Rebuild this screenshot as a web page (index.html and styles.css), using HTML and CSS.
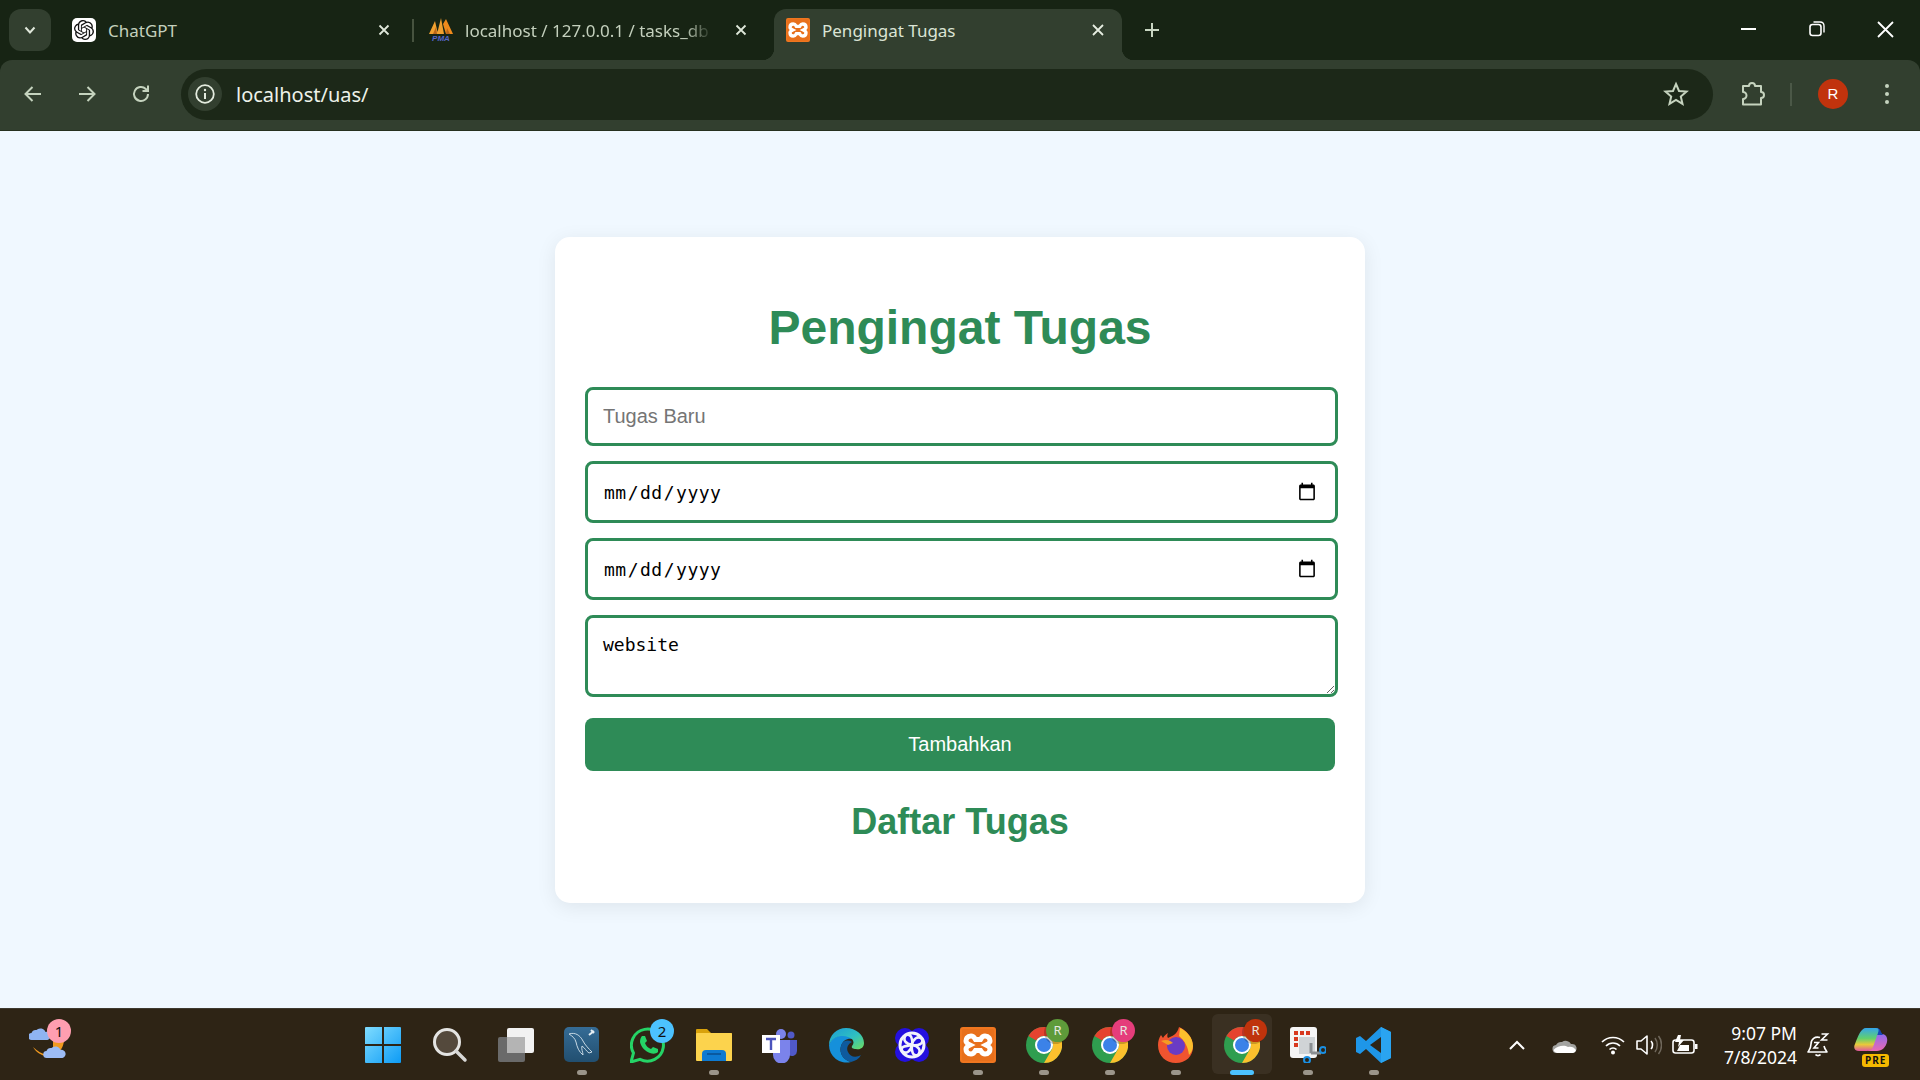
FILE: index.html
```html
<!DOCTYPE html>
<html lang="en">
<head>
    <meta charset="UTF-8">
    <meta name="viewport" content="width=device-width, initial-scale=1.0">
    <title>Pengingat Tugas</title>
    <link rel="stylesheet" href="styles.css">
</head>
<body>
    <svg class="defs" width="0" height="0">
        <defs>
            <symbol id="xampp" viewBox="0 0 36 36">
                <rect x="0" y="0" width="36" height="36" rx="3" fill="#f0761f"/>
                <rect x="2" y="2" width="32" height="32" rx="2" fill="#e8701c"/>
                <path d="M11 9C7 9 6 12 6 14C6 16 8 17 10 18C8 19 6 20 6 22C6 24 7 27 11 27C14 27 14.500 25 15.500 23.500H20.500C21.500 25 22 27 25 27C29 27 30 24 30 22C30 20 28 19 26 18C28 17 30 16 30 14C30 12 29 9 25 9C22 9 21.500 11 20.500 12.500H15.500C14.500 11 14 9 11 9Z" fill="none" stroke="#fff" stroke-width="5"/>
            </symbol>
            <symbol id="chrome" viewBox="0 0 36 36">
                <circle cx="18" cy="18" r="18" fill="#2f9e4f"/>
                <path d="M18 0A18 18 0 0 1 33.600 9L18 9A9 9 0 0 0 10.200 13.500L2.400 9A18 18 0 0 1 18 0Z" fill="#e5432f"/>
                <path d="M33.600 9A18 18 0 0 1 18 36L25.800 22.500A9 9 0 0 0 18 9Z" fill="#fbc02d"/>
                <circle cx="18" cy="18" r="9" fill="#fff"/>
                <circle cx="18" cy="18" r="7" fill="#3b82e8"/>
            </symbol>
            <linearGradient id="winblue" x1="0" y1="0" x2="1" y2="1">
                <stop offset="0" stop-color="#7fdcff"/>
                <stop offset="1" stop-color="#0d9bf5"/>
            </linearGradient>
            <linearGradient id="edgeg" x1="0" y1="0" x2="1" y2="1">
                <stop offset="0" stop-color="#1b9bd8"/>
                <stop offset=".55" stop-color="#2fc0c0"/>
                <stop offset="1" stop-color="#6fdc5f"/>
            </linearGradient>
            <linearGradient id="copg" x1="0" y1="0" x2="0" y2="1">
                <stop offset="0" stop-color="#34a5ea"/>
                <stop offset=".45" stop-color="#62d06d"/>
                <stop offset=".72" stop-color="#e9c93a"/>
                <stop offset="1" stop-color="#e0559f"/>
            </linearGradient>
            <linearGradient id="copr" x1="0" y1="0" x2="0" y2="1">
                <stop offset="0" stop-color="#8f6cf0"/>
                <stop offset="1" stop-color="#ea68b0"/>
            </linearGradient>
            <linearGradient id="mysqlg" x1="0" y1="0" x2="0" y2="1">
                <stop offset="0" stop-color="#356c96"/>
                <stop offset="1" stop-color="#224f70"/>
            </linearGradient>
        </defs>
    </svg>

    <div class="tabstrip">
        <div class="tab-dropdown">
            <svg width="14" height="14" viewBox="0 0 14 14"><path d="M2.500 4.500L7 9.500l4.500-5" fill="none" stroke="#dfe7da" stroke-width="2"/></svg>
        </div>
        <div class="tab">
            <span class="favicon gpt">
                <svg width="20" height="20" viewBox="0 0 24 24"><path fill="#111" d="M22.2819 9.8211a5.9847 5.9847 0 0 0-.5157-4.9108 6.0462 6.0462 0 0 0-6.5098-2.9A6.0651 6.0651 0 0 0 4.9807 4.1818a5.9847 5.9847 0 0 0-3.9977 2.9 6.0462 6.0462 0 0 0 .7427 7.0966 5.98 5.98 0 0 0 .511 4.9107 6.051 6.051 0 0 0 6.5146 2.9001A5.9847 5.9847 0 0 0 13.2599 24a6.0557 6.0557 0 0 0 5.7718-4.2058 5.9894 5.9894 0 0 0 3.9977-2.9001 6.0557 6.0557 0 0 0-.7475-7.0729zm-9.022 12.6081a4.4755 4.4755 0 0 1-2.8764-1.0408l.1419-.0804 4.7783-2.7582a.7948.7948 0 0 0 .3927-.6813v-6.7369l2.02 1.1686a.071.071 0 0 1 .038.052v5.5826a4.504 4.504 0 0 1-4.4945 4.4944zm-9.6607-4.1254a4.4708 4.4708 0 0 1-.5346-3.0137l.142.0852 4.783 2.7582a.7712.7712 0 0 0 .7806 0l5.8428-3.3685v2.3324a.0804.0804 0 0 1-.0332.0615L9.74 19.9502a4.4992 4.4992 0 0 1-6.1408-1.6464zM2.3408 7.8956a4.485 4.485 0 0 1 2.3655-1.9728V11.6a.7664.7664 0 0 0 .3879.6765l5.8144 3.3543-2.0201 1.1685a.0757.0757 0 0 1-.071 0l-4.8303-2.7865A4.504 4.504 0 0 1 2.3408 7.872zm16.5963 3.8558L13.1038 8.364 15.1192 7.2a.0757.0757 0 0 1 .071 0l4.8303 2.7913a4.4944 4.4944 0 0 1-.6765 8.1042v-5.6772a.79.79 0 0 0-.407-.667zm2.0107-3.0231l-.142-.0852-4.7735-2.7818a.7759.7759 0 0 0-.7854 0L9.409 9.2297V6.8974a.0662.0662 0 0 1 .0284-.0615l4.8303-2.7866a4.4992 4.4992 0 0 1 6.6802 4.66zM8.3065 12.863l-2.02-1.1638a.0804.0804 0 0 1-.038-.0567V6.0742a4.4992 4.4992 0 0 1 7.3757-3.4537l-.142.0805L8.704 5.459a.7948.7948 0 0 0-.3927.6813zm1.0976-2.3654l2.602-1.4998 2.6069 1.4998v2.9994l-2.5974 1.4997-2.6067-1.4997Z"/></svg>
            </span>
            <span class="tab-title">ChatGPT</span>
            <svg class="tab-close" width="14" height="14" viewBox="0 0 14 14"><path d="M2.500 2.500l9 9M11.500 2.500l-9 9" stroke="#dfe7da" stroke-width="1.800"/></svg>
        </div>
        <div class="tab-sep"><span></span></div>
        <div class="tab">
            <span class="favicon">
                <svg class="pma-icon" width="24" height="24" viewBox="0 0 24 24">
                    <path d="M0 16L6 3l3 13zM8 16L12 0l3 16z" fill="#f0a030"/>
                    <path d="M14 6l3-5 7 15h-7z" fill="#ef8a1c"/>
                    <path d="M4 16L7 9l1 7zM17 16l1-6 3 6z" fill="#b8651a"/>
                    <text x="12" y="22.500" class="pma-text">PMA</text>
                </svg>
            </span>
            <span class="tab-title fade">localhost / 127.0.0.1 / tasks_db /</span>
            <svg class="tab-close" width="14" height="14" viewBox="0 0 14 14"><path d="M2.500 2.500l9 9M11.500 2.500l-9 9" stroke="#dfe7da" stroke-width="1.800"/></svg>
        </div>
        <div class="tab-sep"></div>
        <div class="tab active">
            <span class="favicon"><svg width="24" height="24"><use href="#xampp"/></svg></span>
            <span class="tab-title">Pengingat Tugas</span>
            <svg class="tab-close" width="14" height="14" viewBox="0 0 14 14"><path d="M2 2l10 10M12 2L2 12" stroke="#e6ede1" stroke-width="1.800"/></svg>
        </div>
        <div class="new-tab">
            <svg width="16" height="16" viewBox="0 0 16 16"><path d="M8 1v14M1 8h14" stroke="#c8d6c2" stroke-width="2"/></svg>
        </div>
        <div class="window-btns">
            <div class="window-btn"><svg width="16" height="4" viewBox="0 0 16 4"><path d="M0 2h15" stroke="#fff" stroke-width="2"/></svg></div>
            <div class="window-btn"><svg width="16" height="16" viewBox="0 0 16 16"><rect x="1" y="3.500" width="11" height="11" rx="2.500" fill="none" stroke="#fff" stroke-width="1.600"/><path d="M4.500 1h6.500q4 0 4 4v6.500" fill="none" stroke="#fff" stroke-width="1.400"/></svg></div>
            <div class="window-btn"><svg width="17" height="17" viewBox="0 0 17 17"><path d="M1 1l15 15M16 1L1 16" stroke="#fff" stroke-width="1.800"/></svg></div>
        </div>
    </div>

    <div class="toolbar">
        <svg class="nav-icon" width="24" height="24" viewBox="0 0 24 24"><path d="M20 12H5M11.500 5L4.500 12l7 7" fill="none" stroke="#c5d3be" stroke-width="2"/></svg>
        <svg class="nav-icon" width="24" height="24" viewBox="0 0 24 24"><path d="M4 12h15M12.500 5l7 7-7 7" fill="none" stroke="#c5d3be" stroke-width="2"/></svg>
        <svg class="nav-icon" width="24" height="24" viewBox="0 0 24 24"><path d="M19 12a7 7 0 1 1-2.200-5.100L19 9M19 3.500V9h-5.500" fill="none" stroke="#c5d3be" stroke-width="2"/></svg>
        <div class="omnibox">
            <div class="site-info">
                <svg width="22" height="22" viewBox="0 0 22 22"><circle cx="11" cy="11" r="8.800" fill="none" stroke="#e3ebde" stroke-width="1.800"/><path d="M11 10v6" stroke="#e3ebde" stroke-width="2"/><circle cx="11" cy="7" r="1.200" fill="#e3ebde"/></svg>
            </div>
            <span class="url">localhost/uas/</span>
            <svg class="star" width="26" height="26" viewBox="0 0 26 26"><path d="M13 3l3 7 7.500.6-5.700 4.900 1.700 7.400L13 19l-6.500 3.900 1.700-7.400L2.500 10.600 10 10z" fill="none" stroke="#c5d3be" stroke-width="2"/></svg>
        </div>
        <svg class="ext" width="26" height="26" viewBox="0 0 26 26"><path d="M3 5h6a3 3 0 0 1 6 0h6v6a2.500 2.500 0 0 1 0 6v6.500H3V18a3.500 3.500 0 0 0 0-7z" fill="none" stroke="#c5d3be" stroke-width="2" stroke-linejoin="round"/></svg>
        <div class="tool-sep"></div>
        <div class="avatar">R</div>
        <div class="kebab"><span></span><span></span><span></span></div>
    </div>

    <main class="page">
        <div class="card">
            <h1>Pengingat Tugas</h1>
            <form class="task-form">
                <input class="field field-text" type="text" placeholder="Tugas Baru">
                <input class="field field-date" type="date">
                <input class="field field-date" type="date">
                <textarea class="field field-area">website</textarea>
                <button class="add-btn" type="button">Tambahkan</button>
            </form>
            <h2>Daftar Tugas</h2>
        </div>
    </main>

    <footer class="taskbar">
        <div class="widget">
            <svg width="38" height="36" viewBox="0 0 38 36">
                <path d="M4 22C10 33 27 37 35 14C33 24 28 31 19 30C13 29 8 26 4 22Z" fill="#f29a1f"/>
                <path d="M24 14L35 14C35 22 31 28 24 30z" fill="#f29a1f"/>
                <path d="M3 15a3.500 3.500 0 0 1-.5-7a4.500 4.500 0 0 1 5-3a5.500 5.500 0 0 1 9 2a4 4 0 0 1 2 8z" fill="#8fb4f2"/>
                <path d="M18 33a3.500 3.500 0 0 1-.5-7a4.500 4.500 0 0 1 5-3a5.500 5.500 0 0 1 9 2a4 4 0 0 1 2 8z" fill="#9dbcf5"/>
            </svg>
            <span class="count-badge pink">1</span>
        </div>
        <div class="task-icons">
            <div class="task-item">
                <svg class="win-logo" width="36" height="36" viewBox="0 0 36 36"><path d="M1 0h16v17H0V1a1 1 0 0 1 1-1zM19 0h16a1 1 0 0 1 1 1v16H19zM0 19h17v17H1a1 1 0 0 1-1-1zM19 19h17v16a1 1 0 0 1-1 1H19z" fill="url(#winblue)"/></svg>
            </div>
            <div class="task-item">
                <svg width="36" height="36" viewBox="0 0 36 36"><circle cx="15" cy="15" r="12.500" fill="#54493c" stroke="#e4e4e2" stroke-width="3"/><path d="M24 24l9 9" stroke="#d8d8d6" stroke-width="3.500" stroke-linecap="round"/></svg>
            </div>
            <div class="task-item">
                <svg width="36" height="36" viewBox="0 0 36 36"><rect x="0" y="10" width="27" height="25" rx="2" fill="#6a6a6a"/><rect x="9" y="1" width="27" height="25" rx="2" fill="#f2f2f2"/><rect x="9" y="10" width="18" height="16" fill="#b4b4b4"/></svg>
            </div>
            <div class="task-item running">
                <svg width="36" height="36" viewBox="0 0 36 36"><rect width="35" height="35" rx="5" fill="url(#mysqlg)"/><path d="M5 7c6-2 11 1 14 7 2 4 6 8 9 11l-3 1c-3-2-4-5-7-7-1 3 1 6 1 9-4-3-6-8-7-13C11 11 8 9 5 7z" fill="none" stroke="#c6d8e4" stroke-width="1"/><path d="M25 8l5-4M27 3l3 3" stroke="#e6eef3" stroke-width="2"/></svg>
            </div>
            <div class="task-item">
                <svg width="36" height="36" viewBox="0 0 36 36"><path d="M1 35l2.500-9A16 16 0 1 1 10 32.300z" fill="none" stroke="#25d366" stroke-width="3"/><path d="M12 9l3 0 2 5-2 2c1 3 3 5 6 6l2-2 5 2v3c-2 2-5 2-8 1-5-2-9-6-10-11 0-3 1-5 2-6z" fill="#25d366"/></svg>
                <span class="count-badge blue">2</span>
            </div>
            <div class="task-item running">
                <svg width="36" height="36" viewBox="0 0 36 36"><path d="M0 3a1 1 0 0 1 1-1h10l4 4h20a1 1 0 0 1 1 1v5H0z" fill="#d9a20b"/><rect y="6" width="36" height="28" rx="1" fill="#fcd34d"/><path d="M6 34v-7a4 4 0 0 1 4-4h16a4 4 0 0 1 4 4v7z" fill="#0e7ad1"/><path d="M11 27h14" stroke="#0a4f8e" stroke-width="1.500"/></svg>
            </div>
            <div class="task-item">
                <svg width="36" height="36" viewBox="0 0 36 36"><circle cx="19" cy="7" r="5" fill="#7b83eb"/><circle cx="29" cy="8" r="3.500" fill="#5059c9"/><path d="M25 13h10v11a5 5 0 0 1-8 4z" fill="#5059c9"/><path d="M11 13h17v15a8 8 0 0 1-17 0z" fill="#7b83eb"/><rect x="0" y="8" width="18" height="18" fill="#fff"/><path d="M4 12h10M9 12v11" stroke="#4b53bc" stroke-width="2.400"/></svg>
            </div>
            <div class="task-item">
                <svg width="36" height="36" viewBox="0 0 36 36">
                    <path d="M1 18A17.500 17.500 0 0 0 23 35C15 33 11 26 13 19C15 12 22 10 27 13C22 6 5 6 1 18Z" fill="#1590db"/>
                    <path d="M13 19C11 26 15 33 23 35C27 34 31 32 33 28C28 31 22 30 20 25C18 21 20 17 24 15C19 12 14 14 13 19Z" fill="#0e5a9e"/>
                    <path d="M1 18C1 8 9 1 18 1C28 1 36 8 36 16C36 21 32 23 28 22C25 22 23 21 24 19C26 17 26 14 24 12C20 8 6 6 1 18Z" fill="url(#edgeg)"/>
                </svg>
            </div>
            <div class="task-item">
                <svg width="36" height="36" viewBox="0 0 36 36">
                    <g fill="#2410e0"><circle cx="11" cy="11" r="10"/><circle cx="25" cy="11" r="10"/><circle cx="11" cy="25" r="10"/><circle cx="25" cy="25" r="10"/></g>
                    <circle cx="18" cy="18" r="12" fill="#2410e0" stroke="#f2f2fb" stroke-width="3"/>
                    <path d="M18 18C12 17 8 13 12 8C17 6 19 12 18 18C19 12 24 8 28 12C30 17 24 19 18 18C24 19 28 23 24 28C19 30 17 24 18 18C17 24 12 28 8 24C6 19 12 19 18 18Z" fill="none" stroke="#f2f2fb" stroke-width="2.600"/>
                </svg>
            </div>
            <div class="task-item running">
                <svg width="36" height="36"><use href="#xampp"/></svg>
            </div>
            <div class="task-item running">
                <svg width="36" height="36"><use href="#chrome"/></svg>
                <span class="profile-badge green">R</span>
            </div>
            <div class="task-item running">
                <svg width="36" height="36"><use href="#chrome"/></svg>
                <span class="profile-badge rose">R</span>
            </div>
            <div class="task-item running">
                <svg width="36" height="36" viewBox="0 0 36 36"><path d="M18 36C8 36 0 29 0 18c0-4 1-7 3-10l2 3c1-2 3-4 5-5-1 2-1 4 0 5 4-2 9-3 11-11 7 3 14 10 14 20 0 9-7 16-17 16z" fill="#f0542f"/><path d="M22 1c7 3 13 10 13 18 0 4-2 7-4 9-1-8-4-14-10-19z" fill="#fbbf2d"/><circle cx="18" cy="19" r="9" fill="#6a3bc4"/><path d="M3 14c5-2 9-1 12 2l-5 2z" fill="#f59b24"/></svg>
            </div>
            <div class="task-item current">
                <svg width="36" height="36"><use href="#chrome"/></svg>
                <span class="profile-badge red">R</span>
            </div>
            <div class="task-item running">
                <svg width="36" height="36" viewBox="0 0 36 36"><rect x="0" y="0" width="27" height="31" rx="3" fill="#f5f5f5"/><path d="M4 4h4v4H4zM10 4h4v4h-4zM16 4h4v4h-4zM4 10h4v4H4zM4 16h4v4H4z" fill="#d8391f"/><rect x="9" y="10" width="16" height="17" fill="#d0d4d6"/><path d="M21 16v10M21 26h10" stroke="#8b8f92" stroke-width="3"/><circle cx="33" cy="23" r="3" fill="none" stroke="#1a8fe3" stroke-width="2"/><circle cx="17" cy="33" r="3" fill="none" stroke="#1a8fe3" stroke-width="2"/></svg>
            </div>
            <div class="task-item running">
                <svg width="36" height="36" viewBox="0 0 36 36"><path d="M25 0l10 5v26l-10 5-15-14-6 5-4-2V11l4-2 6 5zM25 10L14 18l11 8z" fill="#1e96e8"/><path d="M25 0l10 5v26l-10 5z" fill="#2aa4f0"/></svg>
            </div>
        </div>
        <div class="tray">
            <svg class="tray-chev" width="18" height="12" viewBox="0 0 18 12"><path d="M2 10l7-7 7 7" fill="none" stroke="#fff" stroke-width="2"/></svg>
            <svg class="tray-cloud" width="26" height="18" viewBox="0 0 26 18"><path d="M5 17a4 4 0 0 1-1-8a6 6 0 0 1 6-3a6 6 0 0 1 9 2a4.500 4.500 0 0 1 2 9z" fill="#a3a3a0"/><path d="M1.500 14C6 9 13 9 16 11c3-1 6 0 8 3a3.500 3.500 0 0 1-3 3H5a4 4 0 0 1-3.500-3z" fill="#fff"/></svg>
            <svg class="tray-wifi" width="26" height="20" viewBox="0 0 26 20"><path d="M2 7c6-6 16-6 22 0M6 11c4-4 10-4 14 0M9.500 14.500c2-2 5-2 7 0" fill="none" stroke="#fff" stroke-width="1.700"/><circle cx="13" cy="17.500" r="2" fill="#fff"/></svg>
            <svg class="tray-sound" width="26" height="22" viewBox="0 0 26 22"><path d="M1 7h4l6-5v18l-6-5H1z" fill="none" stroke="#fff" stroke-width="1.600" stroke-linejoin="round"/><path d="M15 7c2 2 2 6 0 8" fill="none" stroke="#fff" stroke-width="1.600"/><path d="M19 4c3 4 3 10 0 14M22.500 2c4 5 4 13 0 18" fill="none" stroke="#6f675b" stroke-width="1.500"/></svg>
            <svg class="tray-batt" width="26" height="20" viewBox="0 0 26 20"><rect x="1" y="5" width="21" height="13" rx="2.500" fill="none" stroke="#fff" stroke-width="1.600"/><rect x="23" y="9" width="2.500" height="5" fill="#fff"/><path d="M5 16l3-6h9v6zM6 0L3 7h4l-1 5 6-7H8l1-5z" fill="#fff"/></svg>
            <div class="clock"><span>9:07 PM</span><span>7/8/2024</span></div>
            <svg class="tray-bell" width="24" height="24" viewBox="0 0 24 24"><path d="M14 4.500C9 3 5 6 5 11c0 4-1 5-3 8h19c-1.500-2-2.500-3.500-3-6M9.500 21.500c1 1.500 4 1.500 5 0" fill="none" stroke="#fff" stroke-width="1.600" stroke-linejoin="round"/><path d="M8 9.500h4.500L8 15h4.500M15.500 1h6l-6 6h6" fill="none" stroke="#fff" stroke-width="1.600"/></svg>
            <div class="copilot">
                <svg width="34" height="26" viewBox="0 0 34 26">
                    <path d="M20 7h8c4 0 6 4 5 8-1 5-5 9-10 9h-9z" fill="url(#copr)"/>
                    <path d="M16 1h6c3 0 4 1 5 4l2 3h-9z" fill="#1546b8"/>
                    <path d="M12 1h10c3 0 3 2 2 5L19 20c-1 3-3 4-6 4H5c-4 0-6-3-4-7C4 9 7 1 12 1z" fill="url(#copg)"/>
                </svg>
                <span class="pre-tag">PRE</span>
            </div>
        </div>
    </footer>
</body>
</html>
```

FILE: styles.css
```css
* {
    box-sizing: border-box;
}
html, body {
    height: 100%;
}
body {
    margin: 0;
    height: 1080px;
    overflow: hidden;
    display: flex;
    flex-direction: column;
    background-color: #172414;
    font-family: "Liberation Sans", Arial, sans-serif;
}
.defs {
    position: absolute;
}

/* tab strip */
.tabstrip {
    height: 60px;
    flex: none;
    display: flex;
    align-items: flex-end;
    padding-left: 9px;
    font-family: "Noto Sans", sans-serif;
}
.tab-dropdown {
    width: 42px;
    height: 42px;
    margin-bottom: 9px;
    border-radius: 12px;
    background-color: #323f2f;
    display: flex;
    align-items: center;
    justify-content: center;
}
.tab {
    position: relative;
    width: 348px;
    height: 51px;
    padding: 0 0 9px 12px;
    display: flex;
    align-items: center;
    color: #c4d0bd;
    font-size: 17px;
}
.tab-dropdown + .tab {
    margin-left: 9px;
}
.tab.active {
    background-color: #323f2f;
    border-radius: 12px 12px 0 0;
    color: #dbe4d5;
}
.tab.active::before,
.tab.active::after {
    content: "";
    position: absolute;
    bottom: 0;
    width: 12px;
    height: 12px;
}
.tab.active::before {
    left: -12px;
    background: radial-gradient(circle at 0 0, transparent 12px, #323f2f 12.500px);
}
.tab.active::after {
    right: -12px;
    background: radial-gradient(circle at 100% 0, transparent 12px, #323f2f 12.500px);
}
.favicon {
    width: 24px;
    height: 24px;
    flex: none;
    display: flex;
    align-items: center;
    justify-content: center;
}
.favicon.gpt {
    background-color: #fff;
    border-radius: 5px;
}
.pma-icon {
    overflow: visible;
}
.pma-text {
    fill: #5666c8;
    font-family: "Liberation Sans", Arial, sans-serif;
    font-size: 8px;
    font-style: italic;
    font-weight: 700;
    text-anchor: middle;
}
.tab-title {
    margin-left: 12px;
    width: 250px;
    white-space: nowrap;
}
.tab-title.fade {
    -webkit-mask-image: linear-gradient(to right, #000 88%, transparent 99%);
    mask-image: linear-gradient(to right, #000 88%, transparent 99%);
}
.tab-close {
    position: absolute;
    left: 317px;
    top: 14px;
}
.tab-sep {
    width: 9px;
    height: 51px;
    padding: 10px 0 18px;
    display: flex;
    justify-content: center;
}
.tab-sep span {
    width: 2px;
    background-color: #47533f;
}
.new-tab {
    width: 60px;
    height: 51px;
    padding-bottom: 9px;
    display: flex;
    align-items: center;
    justify-content: center;
}
.window-btns {
    margin-left: auto;
    height: 60px;
    display: flex;
}
.window-btn {
    width: 68.500px;
    height: 58px;
    display: flex;
    align-items: center;
    justify-content: center;
}

/* toolbar */
.toolbar {
    height: 71px;
    flex: none;
    padding: 9px 0 11px 21px;
    background-color: #323f2f;
    border-radius: 12px 12px 0 0;
    border-bottom: 1px solid #26301f;
    display: flex;
    align-items: center;
}
.nav-icon {
    margin-right: 30px;
    flex: none;
}
.omnibox {
    width: 1532px;
    height: 51px;
    margin-left: -2px;
    padding: 0 24px 0 7px;
    border-radius: 26px;
    background-color: #1c2818;
    display: flex;
    align-items: center;
    font-family: "Noto Sans", sans-serif;
}
.site-info {
    width: 34px;
    height: 34px;
    border-radius: 50%;
    background-color: #323f2f;
    display: flex;
    align-items: center;
    justify-content: center;
}
.url {
    margin-left: 14px;
    color: #edf2e9;
    font-size: 20px;
}
.star {
    margin-left: auto;
}
.ext {
    margin-left: 27px;
    flex: none;
}
.tool-sep {
    width: 2px;
    height: 23px;
    margin-left: 24px;
    background-color: #4b5847;
}
.avatar {
    width: 30px;
    height: 30px;
    margin-left: 26px;
    border-radius: 50%;
    background-color: #c1330d;
    color: #fff;
    font-size: 15px;
    line-height: 30px;
    text-align: center;
}
.kebab {
    margin-left: 37px;
    display: flex;
    flex-direction: column;
    gap: 4px;
}
.kebab span {
    width: 4px;
    height: 4px;
    border-radius: 50%;
    background-color: #c5d3be;
}

/* page */
.page {
    flex: 1;
    padding-top: 1px;
    background-color: #f0f8ff;
    display: flex;
    align-items: center;
    justify-content: center;
}
.card {
    width: 810px;
    height: 666px;
    padding: 30px;
    background-color: #fff;
    border-radius: 15px;
    box-shadow: 0 4px 20px rgba(0, 0, 0, 0.08);
}
h1 {
    margin: 33px 0 32px;
    color: #2e8b57;
    font-size: 48px;
    line-height: 55px;
    text-align: center;
}
h2 {
    margin: 30px 0 0;
    color: #2e8b57;
    font-size: 36px;
    line-height: 41px;
    text-align: center;
}
.task-form {
    display: flex;
    flex-direction: column;
    gap: 15px;
}
.field {
    display: block;
    width: 753px;
    padding: 15px;
    border: 3px solid #2e8b57;
    border-radius: 8px;
    background-color: #fff;
    color: #000;
    outline: none;
}
.field-text {
    height: 59px;
    font-family: "Liberation Sans", Arial, sans-serif;
    font-size: 20px;
}
.field-date {
    height: 62px;
    font-family: "DejaVu Sans Mono", monospace;
    font-size: 18px;
    letter-spacing: 0.500px;
}
.field-date::-webkit-calendar-picker-indicator {
    width: 20px;
    height: 20px;
    padding: 0;
    margin-right: 3px;
}
.field-area {
    height: 82px;
    padding-top: 16px;
    font-family: "DejaVu Sans Mono", monospace;
    font-size: 18px;
}
.add-btn {
    height: 53px;
    margin-top: 6px;
    border: none;
    border-radius: 8px;
    background-color: #2e8b57;
    color: #fff;
    font-family: "Liberation Sans", Arial, sans-serif;
    font-size: 20px;
    cursor: pointer;
}

/* taskbar */
.taskbar {
    height: 72px;
    flex: none;
    background-color: #2e2415;
    border-top: 1px solid #3e3a30;
    display: grid;
    grid-template-columns: 351px 1fr auto;
    font-family: "Noto Sans", sans-serif;
}
.widget {
    position: relative;
    padding: 16px 0 0 29px;
}
.count-badge {
    position: absolute;
    width: 24px;
    height: 24px;
    border-radius: 50%;
    color: #111;
    font-size: 15px;
    line-height: 24px;
    text-align: center;
}
.count-badge.pink {
    left: 47px;
    top: 10px;
    background-color: #ff9eb0;
}
.count-badge.blue {
    left: 35px;
    top: 10px;
    background-color: #4cc2ff;
}
.task-icons {
    display: flex;
}
.task-item {
    position: relative;
    width: 66px;
    height: 71px;
    display: flex;
    align-items: center;
    justify-content: center;
}
.task-item.running::after,
.task-item.current::after {
    content: "";
    position: absolute;
    bottom: 5px;
    left: 28px;
    width: 10px;
    height: 5px;
    border-radius: 3px;
    background-color: #9b958a;
}
.task-item.current::before {
    content: "";
    position: absolute;
    top: 5px;
    left: 3px;
    width: 60px;
    height: 60px;
    border-radius: 6px;
    background-color: rgba(255, 255, 255, 0.06);
}
.task-item.current::after {
    left: 21px;
    width: 24px;
    background-color: #4cc2ff;
}
.task-item svg {
    position: relative;
}
.task-item .win-logo {
    margin-right: 3px;
}
.profile-badge {
    position: absolute;
    left: 35px;
    top: 10px;
    width: 23px;
    height: 23px;
    border-radius: 50%;
    color: #e8e8e0;
    font-size: 13px;
    line-height: 23px;
    text-align: center;
    box-shadow: -2px 2px 0 rgba(0, 0, 0, 0.2);
}
.profile-badge.green {
    background-color: #5e9b3a;
}
.profile-badge.rose {
    background-color: #e53d7b;
}
.profile-badge.red {
    background-color: #bf330c;
}
.tray {
    width: 417px;
    display: flex;
    align-items: center;
    padding-left: 5px;
}
.tray-cloud {
    margin-left: 26px;
}
.tray-wifi {
    margin-left: 22px;
}
.tray-sound {
    margin-left: 10px;
}
.tray-batt {
    margin-left: 10px;
}
.clock {
    width: 99px;
    display: flex;
    flex-direction: column;
    align-items: flex-end;
    color: #fff;
    font-size: 17.500px;
    line-height: 24px;
}
.tray-bell {
    margin-left: 9px;
}
.copilot {
    position: relative;
    margin-left: 24px;
    width: 36px;
    height: 36px;
}
.pre-tag {
    position: absolute;
    left: 8px;
    bottom: -4px;
    padding: 0 3px;
    border-radius: 3px;
    background-color: #f5b800;
    color: #111;
    font-size: 10px;
    font-weight: 700;
    line-height: 13px;
    letter-spacing: 1px;
}
```
